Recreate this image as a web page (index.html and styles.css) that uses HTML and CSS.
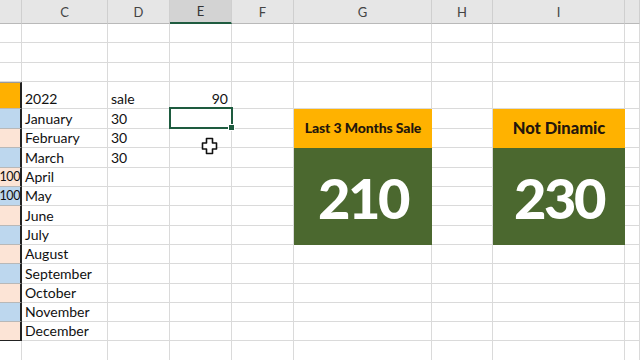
FILE: index.html
```html
<!DOCTYPE html>
<html>
<head>
<meta charset="utf-8">
<link rel="stylesheet" href="styles.css">
</head>
<body>
<div class="sheet">
  <div class="h"></div><div class="h">C</div><div class="h">D</div><div class="h h-sel">E</div><div class="h">F</div><div class="h">G</div><div class="h">H</div><div class="h">I</div><div class="h"></div>

  <div class="c"></div><div class="c"></div><div class="c"></div><div class="c"></div><div class="c"></div><div class="c"></div><div class="c"></div><div class="c"></div><div class="c"></div>
  <div class="c"></div><div class="c"></div><div class="c"></div><div class="c"></div><div class="c"></div><div class="c"></div><div class="c"></div><div class="c"></div><div class="c"></div>
  <div class="c"></div><div class="c"></div><div class="c"></div><div class="c"></div><div class="c"></div><div class="c"></div><div class="c"></div><div class="c"></div><div class="c"></div>

  <div class="c b b-orange"></div><div class="c">2022</div><div class="c">sale</div><div class="c r">90</div><div class="c"></div><div class="c"></div><div class="c"></div><div class="c"></div><div class="c"></div>

  <div class="c b b-blue"></div><div class="c">January</div><div class="c">30</div><div class="c selected"></div><div class="c"></div><div class="c"></div><div class="c"></div>
  <div class="c b b-peach"></div><div class="c">February</div><div class="c">30</div><div class="c"></div><div class="c"></div><div class="c"></div><div class="c"></div>
  <div class="c b b-blue"></div><div class="c">March</div><div class="c">30</div><div class="c"></div><div class="c"></div><div class="c"></div><div class="c"></div>
  <div class="c b b-peach r num">100</div><div class="c">April</div><div class="c"></div><div class="c"></div><div class="c"></div><div class="c"></div><div class="c"></div>
  <div class="c b b-blue r num">100</div><div class="c">May</div><div class="c"></div><div class="c"></div><div class="c"></div><div class="c"></div><div class="c"></div>
  <div class="c b b-peach"></div><div class="c">June</div><div class="c"></div><div class="c"></div><div class="c"></div><div class="c"></div><div class="c"></div>
  <div class="c b b-blue"></div><div class="c">July</div><div class="c"></div><div class="c"></div><div class="c"></div><div class="c"></div><div class="c"></div>

  <div class="c b b-peach"></div><div class="c">August</div><div class="c"></div><div class="c"></div><div class="c"></div><div class="c"></div><div class="c"></div><div class="c"></div><div class="c"></div>
  <div class="c b b-blue"></div><div class="c">September</div><div class="c"></div><div class="c"></div><div class="c"></div><div class="c"></div><div class="c"></div><div class="c"></div><div class="c"></div>
  <div class="c b b-peach"></div><div class="c">October</div><div class="c"></div><div class="c"></div><div class="c"></div><div class="c"></div><div class="c"></div><div class="c"></div><div class="c"></div>
  <div class="c b b-blue"></div><div class="c">November</div><div class="c"></div><div class="c"></div><div class="c"></div><div class="c"></div><div class="c"></div><div class="c"></div><div class="c"></div>
  <div class="c b b-peach b-last"></div><div class="c">December</div><div class="c"></div><div class="c"></div><div class="c"></div><div class="c"></div><div class="c"></div><div class="c"></div><div class="c"></div>
  <div class="c"></div><div class="c"></div><div class="c"></div><div class="c"></div><div class="c"></div><div class="c"></div><div class="c"></div><div class="c"></div><div class="c"></div>

  <div class="card-head card-g small">Last 3 Months Sale</div>
  <div class="card-body card-g">210</div>
  <div class="card-head card-i">Not Dinamic</div>
  <div class="card-body card-i">230</div>

  <svg class="cursor" width="17" height="18" viewBox="0 0 17 18">
    <path d="M5.5 1.5 H11.5 V6 H15.5 V12 H11.5 V16.5 H5.5 V12 H1.5 V6 H5.5 Z" fill="#fff" stroke="#111" stroke-width="1.6" stroke-linejoin="round"/>
  </svg>
</div>
</body>
</html>
```

FILE: styles.css
```css
html, body {
  margin: 0;
  padding: 0;
  background: #fff;
  overflow: hidden;
}

.sheet {
  position: relative;
  width: 640px;
  height: 360px;
  display: grid;
  grid-template-columns: 22px 86px 62px 62px 62px 138px 61px 132px 15px;
  grid-template-rows: 24px 19px 20px 19px 27px 20px 19px 20px 19px 19px 20px 19px 19px 20px 19px 19px 19px 20px;
  font-family: Lato, "Open Sans", sans-serif;
  font-size: 14px;
  color: #111;
  overflow: hidden;
}

.h {
  background: #e6e6e6;
  border-right: 1px solid #cfcfcf;
  border-bottom: 1px solid #b9b9b9;
  color: #444;
  font-size: 13px;
  display: flex;
  align-items: center;
  justify-content: center;
  box-sizing: border-box;
}

.h-sel {
  background: #d3d3d3;
  border-bottom: 2px solid #1f5c40;
  color: #333;
}

.c {
  box-sizing: border-box;
  border-right: 1px solid #dadada;
  border-bottom: 1px solid #dadada;
  display: flex;
  align-items: flex-end;
  padding: 0 3px 1px;
  line-height: 16px;
  white-space: nowrap;
}

.r {
  justify-content: flex-end;
}

.b {
  border-right: 2px solid #222;
  border-bottom-color: #b8b8b8;
  padding: 0 0 1px 0;
}

.num {
  font-size: 12.5px;
  letter-spacing: -0.4px;
}

.b-orange {
  background: #ffb000;
  border-top: 1px solid #9a9a9a;
}

.b-blue {
  background: #bdd7ee;
}

.b-peach {
  background: #fce4d6;
}

.b-last {
  border-bottom: 1px solid #222;
}

.selected {
  position: relative;
}

.selected::after {
  content: "";
  position: absolute;
  left: -1px;
  top: -2px;
  right: -2px;
  bottom: -1px;
  border: 2px solid #1e5b3f;
}

.selected::before {
  content: "";
  position: absolute;
  right: -4px;
  bottom: -3px;
  width: 5px;
  height: 5px;
  background: #1e5b3f;
  border: 1px solid #fff;
  z-index: 2;
}

.card-head {
  background: #ffb200;
  grid-row: 6 / span 2;
  display: flex;
  align-items: center;
  justify-content: center;
  font-weight: 900;
  font-size: 16.5px;
  color: #24160c;
  padding-bottom: 2px;
  box-sizing: border-box;
  white-space: nowrap;
}

.card-head.small {
  font-size: 14px;
  letter-spacing: -0.1px;
}

.card-body {
  background: #4b682f;
  grid-row: 8 / span 5;
  display: flex;
  align-items: center;
  justify-content: center;
  color: #fff;
  font-weight: 900;
  font-size: 56px;
  letter-spacing: -2.5px;
  padding-top: 2px;
  box-sizing: border-box;
}

.card-g {
  grid-column: 6;
}

.card-i {
  grid-column: 8;
}

.cursor {
  position: absolute;
  left: 201px;
  top: 137px;
}
```
